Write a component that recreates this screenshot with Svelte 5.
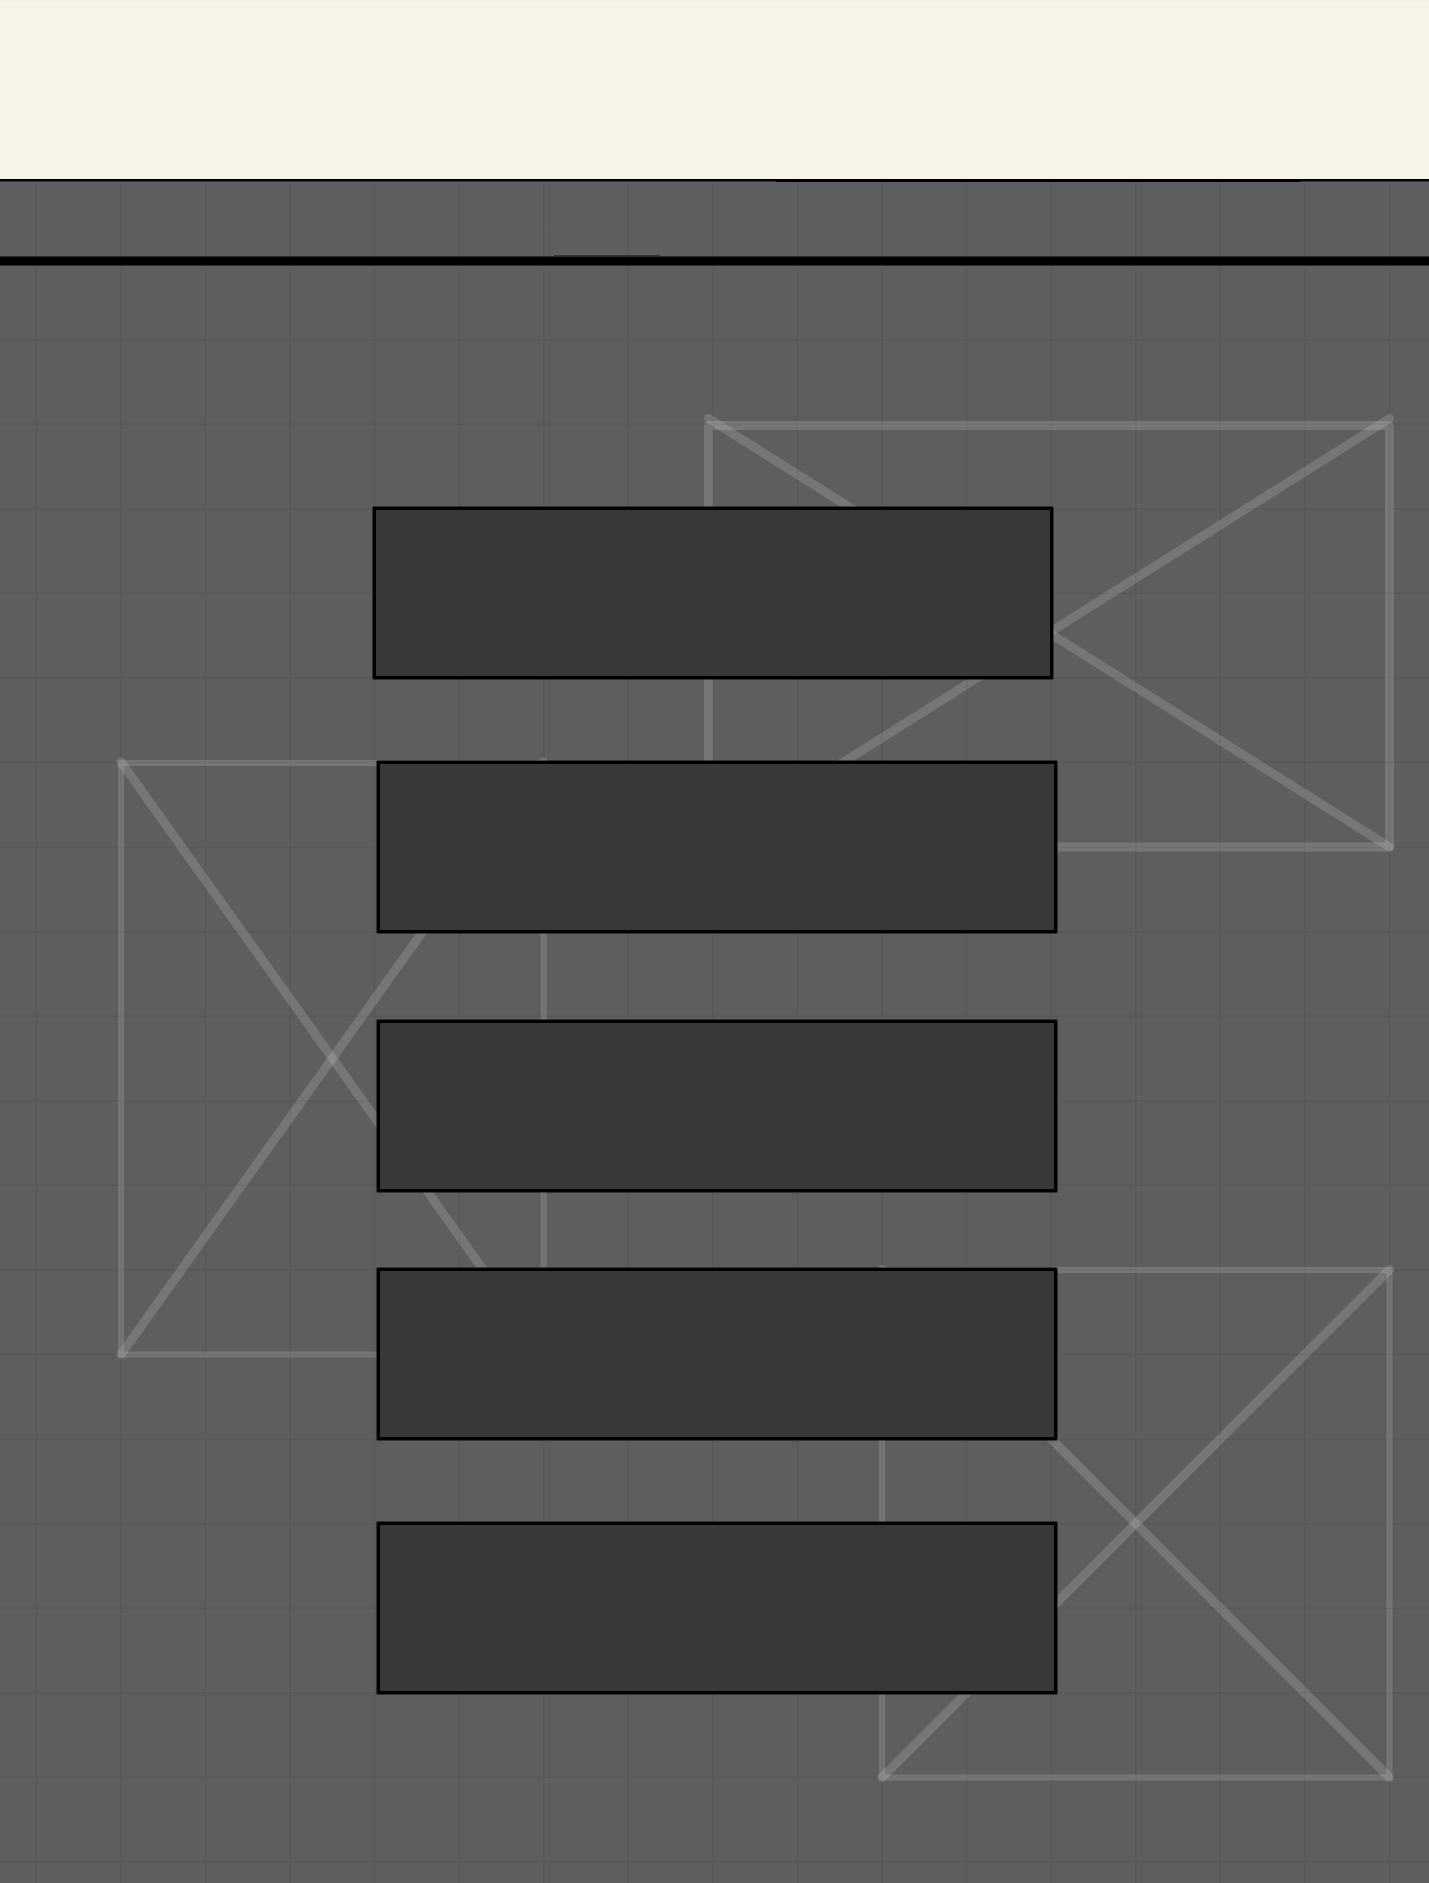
<script>
  const step = 84.57;
  const columns = Array.from({ length: 17 }, (_, i) => 36.4 + i * step);
  const rows = Array.from({ length: 19 }, (_, i) => 339.7 + i * step);

  // Crossed placeholder frames; `cap` is where the diagonals start.
  const frames = [
    { left: 708.5, right: 1389.5, top: 425.5, cap: 418.5, bottom: 847, edge: 9, cross: 9 },
    { left: 121, right: 543.7, top: 763, cap: 762, bottom: 1354.5, edge: 6, cross: 9 },
    { left: 882, right: 1389.5, top: 1270, cap: 1269.5, bottom: 1777.5, edge: 6, cross: 9 }
  ];

  const items = ['first', 'second', 'third', 'fourth', 'fifth'];
</script>

<div class="page">
  <header class="top"></header>
  <main class="board">
    <svg class="backdrop" viewBox="0 181 1429 1702" preserveAspectRatio="none" aria-hidden="true">
      {#each columns as x}
        <line class="grid" x1={x} x2={x} y1="181" y2="1883" />
      {/each}
      {#each rows as y}
        <line class="grid" x1="0" x2="1429" y1={y} y2={y} />
      {/each}
      <path class="shade" d="M0 181H1429V182H0Z M554 255H660V256H554Z" />
      <path class="ink" d="M776 181H1300V182H776Z" />
      <path class="mark" d="M547 224.5H569" />
      {#each frames as f}
        <path
          class="edge"
          stroke-width={f.edge}
          d="M{f.left} {f.top}H{f.right}V{f.bottom}H{f.left}Z"
        />
        <line class="cross" stroke-width={f.cross} x1={f.left} y1={f.cap} x2={f.right} y2={f.bottom} />
        <line class="cross" stroke-width={f.cross} x1={f.right} y1={f.cap} x2={f.left} y2={f.bottom} />
      {/each}
    </svg>
    <div class="strip"></div>
    <div class="rule"></div>
    <nav class="menu" aria-label="Menu">
      {#each items as item}
        <button class="item {item}" type="button" aria-label="{item} item"></button>
      {/each}
    </nav>
  </main>
</div>

<style>
  :global(body) {
    margin: 0;
    background: #5e5e5e;
  }

  .page {
    display: flex;
    flex-direction: column;
    min-height: 100vh;
    font-family: 'Liberation Sans', sans-serif;
  }

  .top {
    box-sizing: border-box;
    height: 181px;
    background: #f7f3e8;
    border-top: 1px solid #ededed;
    border-bottom: 2px solid #000;
  }

  .board {
    position: relative;
    flex: 1;
    display: flex;
    flex-direction: column;
    background: #5e5e5e;
  }

  .backdrop {
    position: absolute;
    inset: 0;
    width: 100%;
    height: 100%;
  }

  .grid {
    stroke: #585858;
    stroke-width: 1.4;
  }

  .shade {
    fill: #333;
  }

  .ink {
    fill: #000;
  }

  .mark {
    stroke: #6a5c56;
    stroke-width: 1;
  }

  .edge,
  .cross {
    fill: none;
    stroke: #fff;
    stroke-opacity: 0.15;
    stroke-linejoin: round;
    stroke-linecap: round;
  }

  .strip {
    height: 75px;
  }

  .rule {
    position: relative;
    height: 8px;
    background: #000;
    border-top: 1px solid #2c2c2c;
    border-bottom: 1px solid #2c2c2c;
  }

  .menu {
    position: relative;
    display: grid;
    grid-template-columns: 373fr 4px 676fr 4px 372fr;
    grid-template-rows: 172px 82px 172px 87px 172px 76px 172px 82px 172px;
    padding: 241px 0 189px;
  }

  .item {
    grid-column: 3 / 5;
    padding: 0;
    background: #383838;
    border: 3px solid #000;
    border-radius: 1px;
    box-shadow: 0 0 0 1px rgba(0, 0, 0, 0.45);
  }

  .first {
    grid-column: 2 / 4;
    grid-row: 1;
  }

  .second {
    grid-row: 3;
  }

  .third {
    grid-row: 5;
  }

  .fourth {
    grid-row: 7;
  }

  .fifth {
    grid-row: 9;
  }
</style>
